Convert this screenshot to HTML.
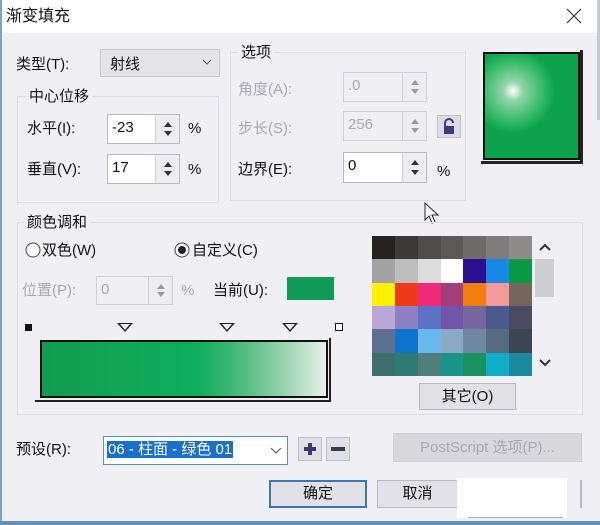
<!DOCTYPE html>
<html><head><meta charset="utf-8"><style>
*{margin:0;padding:0;box-sizing:border-box}
body{width:600px;height:525px;background:#f0eff4;font-family:"Liberation Sans","Noto Sans CJK SC",sans-serif;font-size:15px;color:#111;position:relative;overflow:hidden}
.a{position:absolute}
.t{position:absolute;white-space:nowrap;line-height:17px}
.g{color:#a8a8b0}
.grp{position:absolute;border:1px solid #dcdce2}
.inp{position:absolute;background:#fff;border:1px solid #b8b8c0}
.inp.d{background:#f0eff4;border-color:#cfcfd6}
.spin{position:absolute;right:0;top:0;bottom:0;width:24px;border-left:1px solid #d0d0d6;background:#eeeef2}
.spin:before,.spin:after{content:"";position:absolute;left:8px;border-left:4px solid transparent;border-right:4px solid transparent}
.spin:before{top:7px;border-bottom:5px solid #333}
.spin:after{bottom:7px;border-top:5px solid #333}
.d .spin:before{border-bottom-color:#999}.d .spin:after{border-top-color:#999}
.btn{position:absolute;background:#e2e2e6;border:1px solid #b8b8c0;text-align:center}
.tri{position:absolute;width:0;height:0;border-left:8px solid transparent;border-right:8px solid transparent;border-top:9px solid #222}
.tri:after{content:"";position:absolute;left:-5px;top:-8px;border-left:5px solid transparent;border-right:5px solid transparent;border-top:6px solid #f0eff4}
</style></head><body>
<div class="a" style="left:0;top:0;width:600px;height:33px;background:#fff"></div>
<div class="a" style="left:0;top:0;width:2px;height:525px;background:#7aa4c8"></div>
<div class="a" style="left:597px;top:0;width:3px;height:120px;background:#c8c8d0"></div>
<div class="a" style="left:0;top:521px;width:600px;height:4px;background:#5e93bf"></div>
<div class="t" style="left:6px;top:8px;font-size:16px">渐变填充</div>
<svg class="a" style="left:566px;top:8px" width="16" height="16"><path d="M1 1L15 15M15 1L1 15" stroke="#333" stroke-width="1.2"/></svg>

<div class="t" style="left:16px;top:56px">类型(T):</div>
<div class="a" style="left:100px;top:49px;width:120px;height:28px;background:#e4e4e8;border:1px solid #c8c8ce"></div>
<div class="t" style="left:110px;top:56px">射线</div>
<svg class="a" style="left:202px;top:58px" width="10" height="8"><path d="M1 2L5 6L9 2" stroke="#555" fill="none"/></svg>

<div class="grp" style="left:17px;top:96px;width:202px;height:107px"></div>
<div class="t" style="left:26px;top:88px;background:#f0eff4;padding:0 3px">中心位移</div>
<div class="t" style="left:27px;top:120px">水平(I):</div>
<div class="inp" style="left:107px;top:114px;width:73px;height:30px"><span class="t" style="left:4px;top:4px">-23</span><div class="spin"></div></div>
<div class="t" style="left:188px;top:120px">%</div>
<div class="t" style="left:27px;top:161px">垂直(V):</div>
<div class="inp" style="left:107px;top:154px;width:73px;height:30px"><span class="t" style="left:4px;top:4px">17</span><div class="spin"></div></div>
<div class="t" style="left:188px;top:161px">%</div>

<div class="grp" style="left:230px;top:52px;width:236px;height:149px"></div>
<div class="t" style="left:238px;top:44px;background:#f0eff4;padding:0 3px">选项</div>
<div class="t g" style="left:238px;top:81px">角度(A):</div>
<div class="inp d" style="left:343px;top:72px;width:84px;height:30px"><span class="t g" style="left:4px;top:4px">.0</span><div class="spin"></div></div>
<div class="t g" style="left:238px;top:120px">步长(S):</div>
<div class="inp d" style="left:343px;top:111px;width:84px;height:30px"><span class="t g" style="left:4px;top:4px">256</span><div class="spin"></div></div>
<div class="a" style="left:437px;top:115px;width:24px;height:23px;background:#dcdce4;border:1px solid #c0c0c8"></div>
<svg class="a" style="left:442px;top:118px" width="14" height="17"><path d="M3 8V5a4 4 0 0 1 8 0" stroke="#3a3a80" stroke-width="2" fill="none"/><rect x="2" y="8" width="10" height="8" fill="#3a3a80"/></svg>
<div class="t" style="left:238px;top:161px">边界(E):</div>
<div class="inp" style="left:343px;top:152px;width:84px;height:31px"><span class="t" style="left:4px;top:4px">0</span><div class="spin"></div></div>
<div class="t" style="left:437px;top:163px">%</div>

<div class="a" style="left:481px;top:50px;width:102px;height:114px;border-right:3px solid #222;border-bottom:3px solid #222"></div>
<div class="a" style="left:483px;top:52px;width:97px;height:108px;border:2px solid #111;background:radial-gradient(circle at 28px 37px,#fff 0,#8fd4a8 10px,#2db862 32px,#0ca34c 42px,#0ca34c 100%)"></div>

<svg class="a" style="left:424px;top:202px" width="16" height="24"><path d="M1 1V18L5 14L8 21L11 20L8 13H14Z" fill="#fff" stroke="#222"/></svg>

<div class="grp" style="left:17px;top:222px;width:566px;height:193px"></div>
<div class="t" style="left:24px;top:214px;background:#f0eff4;padding:0 3px">颜色调和</div>
<svg class="a" style="left:25px;top:242px" width="16" height="16"><circle cx="8" cy="8" r="7" fill="#fff" stroke="#444"/></svg>
<div class="t" style="left:42px;top:242px">双色(W)</div>
<svg class="a" style="left:174px;top:242px" width="16" height="16"><circle cx="8" cy="8" r="7" fill="#fff" stroke="#444"/><circle cx="8" cy="8" r="4" fill="#222"/></svg>
<div class="t" style="left:192px;top:242px">自定义(C)</div>
<div class="t g" style="left:22px;top:282px">位置(P):</div>
<div class="inp d" style="left:96px;top:276px;width:77px;height:29px"><span class="t g" style="left:4px;top:4px">0</span><div class="spin"></div></div>
<div class="t g" style="left:181px;top:282px">%</div>
<div class="t" style="left:213px;top:282px">当前(U):</div>
<div class="a" style="left:287px;top:277px;width:47px;height:23px;background:#0f9a55"></div>

<div class="a" style="left:25px;top:324px;width:7px;height:7px;background:#111"></div>
<div class="tri" style="left:117px;top:323px"></div>
<div class="tri" style="left:219px;top:323px"></div>
<div class="tri" style="left:282px;top:323px"></div>
<div class="a" style="left:335px;top:323px;width:8px;height:8px;border:1px solid #111;background:#fff"></div>
<div class="a" style="left:35px;top:338px;width:296px;height:64px;border-right:2px solid #222;border-bottom:2px solid #222"></div>
<div class="a" style="left:40px;top:340px;width:288px;height:58px;border:2px solid #111;background:linear-gradient(90deg,#129b50 0,#10a656 25%,#0eae5c 55%,#43b878 68%,#96d3ae 85%,#e8f0ea 100%)"></div>

<div class="a" style="left:372px;top:236px;width:160px;height:140px;display:grid;grid-template-columns:repeat(7,1fr);grid-template-rows:repeat(6,1fr)">
<i style="background:#252220"></i><i style="background:#3b3a39"></i><i style="background:#4e4d4c"></i><i style="background:#5a5958"></i><i style="background:#6c6b6a"></i><i style="background:#7e7d7c"></i><i style="background:#8e8d8c"></i>
<i style="background:#a4a3a3"></i><i style="background:#bebdbd"></i><i style="background:#dddcdc"></i><i style="background:#fff"></i><i style="background:#2a0f8f"></i><i style="background:#1788e5"></i><i style="background:#0a9a45"></i>
<i style="background:#fff200"></i><i style="background:#ee3a1b"></i><i style="background:#ee2a7b"></i><i style="background:#a1407a"></i><i style="background:#f57f0e"></i><i style="background:#f49a9a"></i><i style="background:#76675e"></i>
<i style="background:#b9a7d8"></i><i style="background:#8e80c5"></i><i style="background:#5d72c2"></i><i style="background:#7254a8"></i><i style="background:#76679f"></i><i style="background:#4b5a8c"></i><i style="background:#484b61"></i>
<i style="background:#5d7090"></i><i style="background:#0c74cd"></i><i style="background:#66b8ee"></i><i style="background:#8ea9c6"></i><i style="background:#6f8aa0"></i><i style="background:#566a80"></i><i style="background:#3a4650"></i>
<i style="background:#3d6f6a"></i><i style="background:#2e7a73"></i><i style="background:#4f7e7b"></i><i style="background:#179587"></i><i style="background:#1a9260"></i><i style="background:#10aec8"></i><i style="background:#1a8a9c"></i>
</div>
<svg class="a" style="left:539px;top:243px" width="12" height="10"><path d="M1 7L6 2L11 7" stroke="#333" stroke-width="2" fill="none"/></svg>
<div class="a" style="left:535px;top:259px;width:19px;height:38px;background:#cdcdd2"></div>
<svg class="a" style="left:539px;top:358px" width="12" height="10"><path d="M1 2L6 7L11 2" stroke="#333" stroke-width="2" fill="none"/></svg>
<div class="btn" style="left:419px;top:383px;width:97px;height:27px;line-height:25px">其它(O)</div>

<div class="t" style="left:16px;top:441px">预设(R):</div>
<div class="a" style="left:103px;top:436px;width:185px;height:29px;background:#fff;border:1px solid #5a8fc0"></div>
<div class="t" style="left:107px;top:441px;background:#1a6fc7;color:#fff;padding:0 1px">06 - 柱面 - 绿色 01</div>
<svg class="a" style="left:270px;top:447px" width="12" height="8"><path d="M1 1L6 6L11 1" stroke="#555" fill="none"/></svg>
<div class="a" style="left:298px;top:437px;width:24px;height:24px;background:#e0e0e6;border:1px solid #c0c0c8"></div>
<svg class="a" style="left:303px;top:442px" width="14" height="14"><path d="M7 1V13M1 7H13" stroke="#3a3a70" stroke-width="4"/></svg>
<div class="a" style="left:326px;top:437px;width:24px;height:24px;background:#e0e0e6;border:1px solid #c0c0c8"></div>
<div class="a" style="left:331px;top:447px;width:14px;height:4px;background:#3a3a50"></div>
<div class="btn" style="left:393px;top:433px;width:189px;height:29px;line-height:27px;color:#a8a8b0;background:#d8d8dc;border-color:#d0d0d4">PostScript 选项(P)...</div>

<div class="btn" style="left:269px;top:480px;width:98px;height:28px;line-height:24px;border:2px solid #3978b2">确定</div>
<div class="btn" style="left:377px;top:480px;width:80px;height:28px;line-height:26px;border-right:none">取消</div>
<div class="a" style="left:457px;top:478px;width:110px;height:40px;background:#fff"></div>
<div class="a" style="left:468px;top:517px;width:95px;height:1px;background:#aab"></div>
<div class="a" style="left:580px;top:480px;width:2px;height:28px;background:#b8b8c0"></div>
</body></html>
